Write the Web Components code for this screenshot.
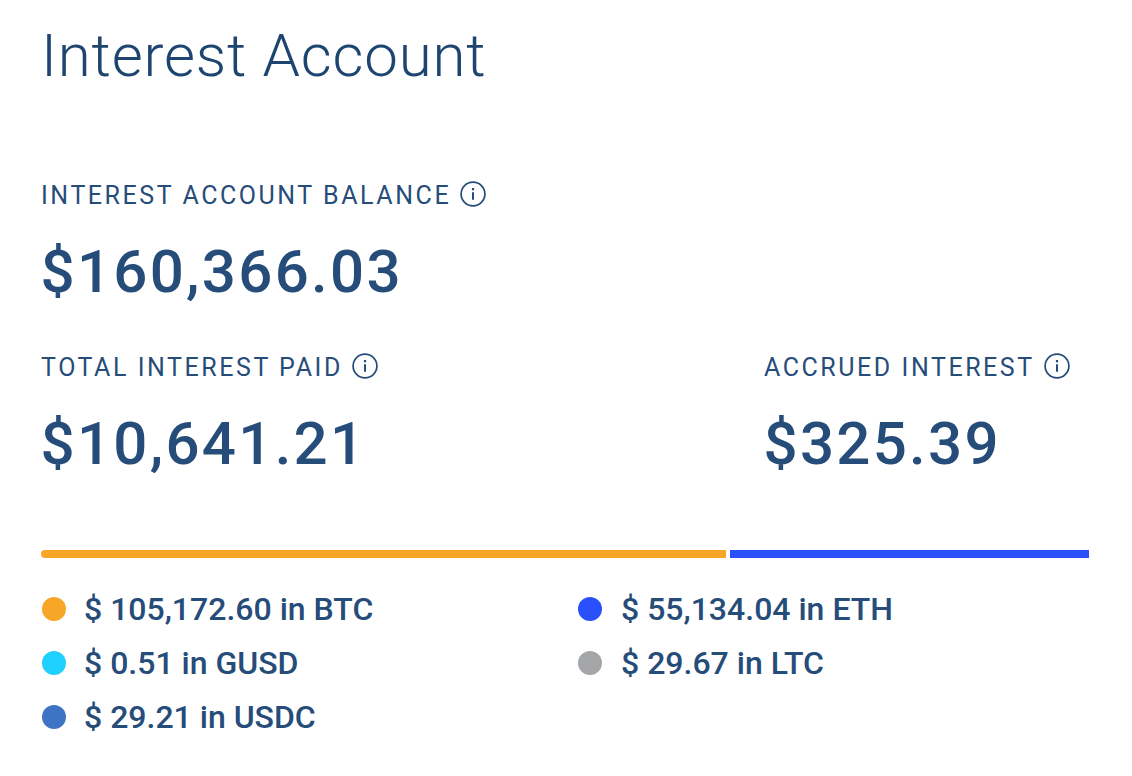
<!DOCTYPE html>
<html>
<head>
<style>
html,body{margin:0;background:#fff}
body{font-family:Roboto,sans-serif;color:#264c7a}
</style>
</head>
<body>
<interest-card></interest-card>
<template id="stat-tpl">
<style>
:host{display:block}
.lbl{display:flex;align-items:center;gap:9px;height:26px;font-size:25px;letter-spacing:2.55px;color:#264c7a;white-space:nowrap}
svg{width:26px;height:26px;display:block;margin-top:-3px}
.val{font-size:60px;font-weight:500;letter-spacing:2.3px;line-height:70px;margin:29px 0 0 -.5px;color:#264c7a;white-space:nowrap}
</style>
<div class="lbl"><span id="l"></span><svg viewBox="0 0 26 26" fill="none" stroke="#264c7a"><circle cx="13" cy="13" r="11.9" stroke-width="1.7"/><path d="M13 11.2v7.6" stroke-width="2"/><path d="M13 7v2.3" stroke-width="2.2"/></svg></div>
<div class="val" id="v"></div>
</template>
<script>
class InfoStat extends HTMLElement{
  constructor(){
    super();
    this.attachShadow({mode:'open'})
    this.shadowRoot.appendChild(document.getElementById('stat-tpl').content.cloneNode(true))
  }
  connectedCallback(){
    this.shadowRoot.getElementById('l').textContent=this.getAttribute('label')
    this.shadowRoot.getElementById('v').textContent=this.getAttribute('value')
  }
}
customElements.define('info-stat',InfoStat)

class LegendItem extends HTMLElement{
  constructor(){
    super();
    this.attachShadow({mode:'open'})
  }
  connectedCallback(){
    this.shadowRoot.innerHTML=`
    <style>
      :host{display:flex;align-items:center;height:54px;font-size:32px;font-weight:500;color:#264c7a;white-space:nowrap}
      i{width:24px;height:24px;border-radius:50%;margin-right:var(--dot-gap,18px);background:${this.getAttribute('color')}}
    </style>
    <i></i><slot></slot>`
  }
}
customElements.define('legend-item',LegendItem)

class InterestCard extends HTMLElement{
  constructor(){
    super();
    this.attachShadow({mode:'open'})
    this.shadowRoot.innerHTML=`
    <style>
      :host{display:block;padding:20px 43px 0 41px}
      h1{margin:0;font-size:60px;font-weight:300;line-height:72px;letter-spacing:.8px;color:#1d4570}
      .row{display:flex;margin-top:47px}
      .row info-stat:first-child{width:723px}
      .bar{display:flex;gap:4px;height:8px;margin-top:71px}
      .bar b{display:block;border-radius:4px 0 0 4px;background:#f8a627;width:685px}
      .bar b+b{flex:1;border-radius:0;background:#2a50fb}
      .legend{display:grid;grid-template-columns:536px 1fr;margin:24px 0 0 1px}
      .legend legend-item:nth-child(even){--dot-gap:19px}
    </style>
    <h1>Interest Account</h1>
    <info-stat label="INTEREST ACCOUNT BALANCE" value="$160,366.03" style="margin-top:90px"></info-stat>
    <div class="row">
      <info-stat label="TOTAL INTEREST PAID" value="$10,641.21"></info-stat>
      <info-stat label="ACCRUED INTEREST" value="$325.39"></info-stat>
    </div>
    <div class="bar"><b></b><b></b></div>
    <div class="legend">
      <legend-item color="#f8a627">$ 105,172.60 in BTC</legend-item>
      <legend-item color="#2a50fb">$ 55,134.04 in ETH</legend-item>
      <legend-item color="#20d0ff">$ 0.51 in GUSD</legend-item>
      <legend-item color="#a4a6a8">$ 29.67 in LTC</legend-item>
      <legend-item color="#3d75c4">$ 29.21 in USDC</legend-item>
    </div>`
  }
}
customElements.define('interest-card',InterestCard)
</script>
</body>
</html>
